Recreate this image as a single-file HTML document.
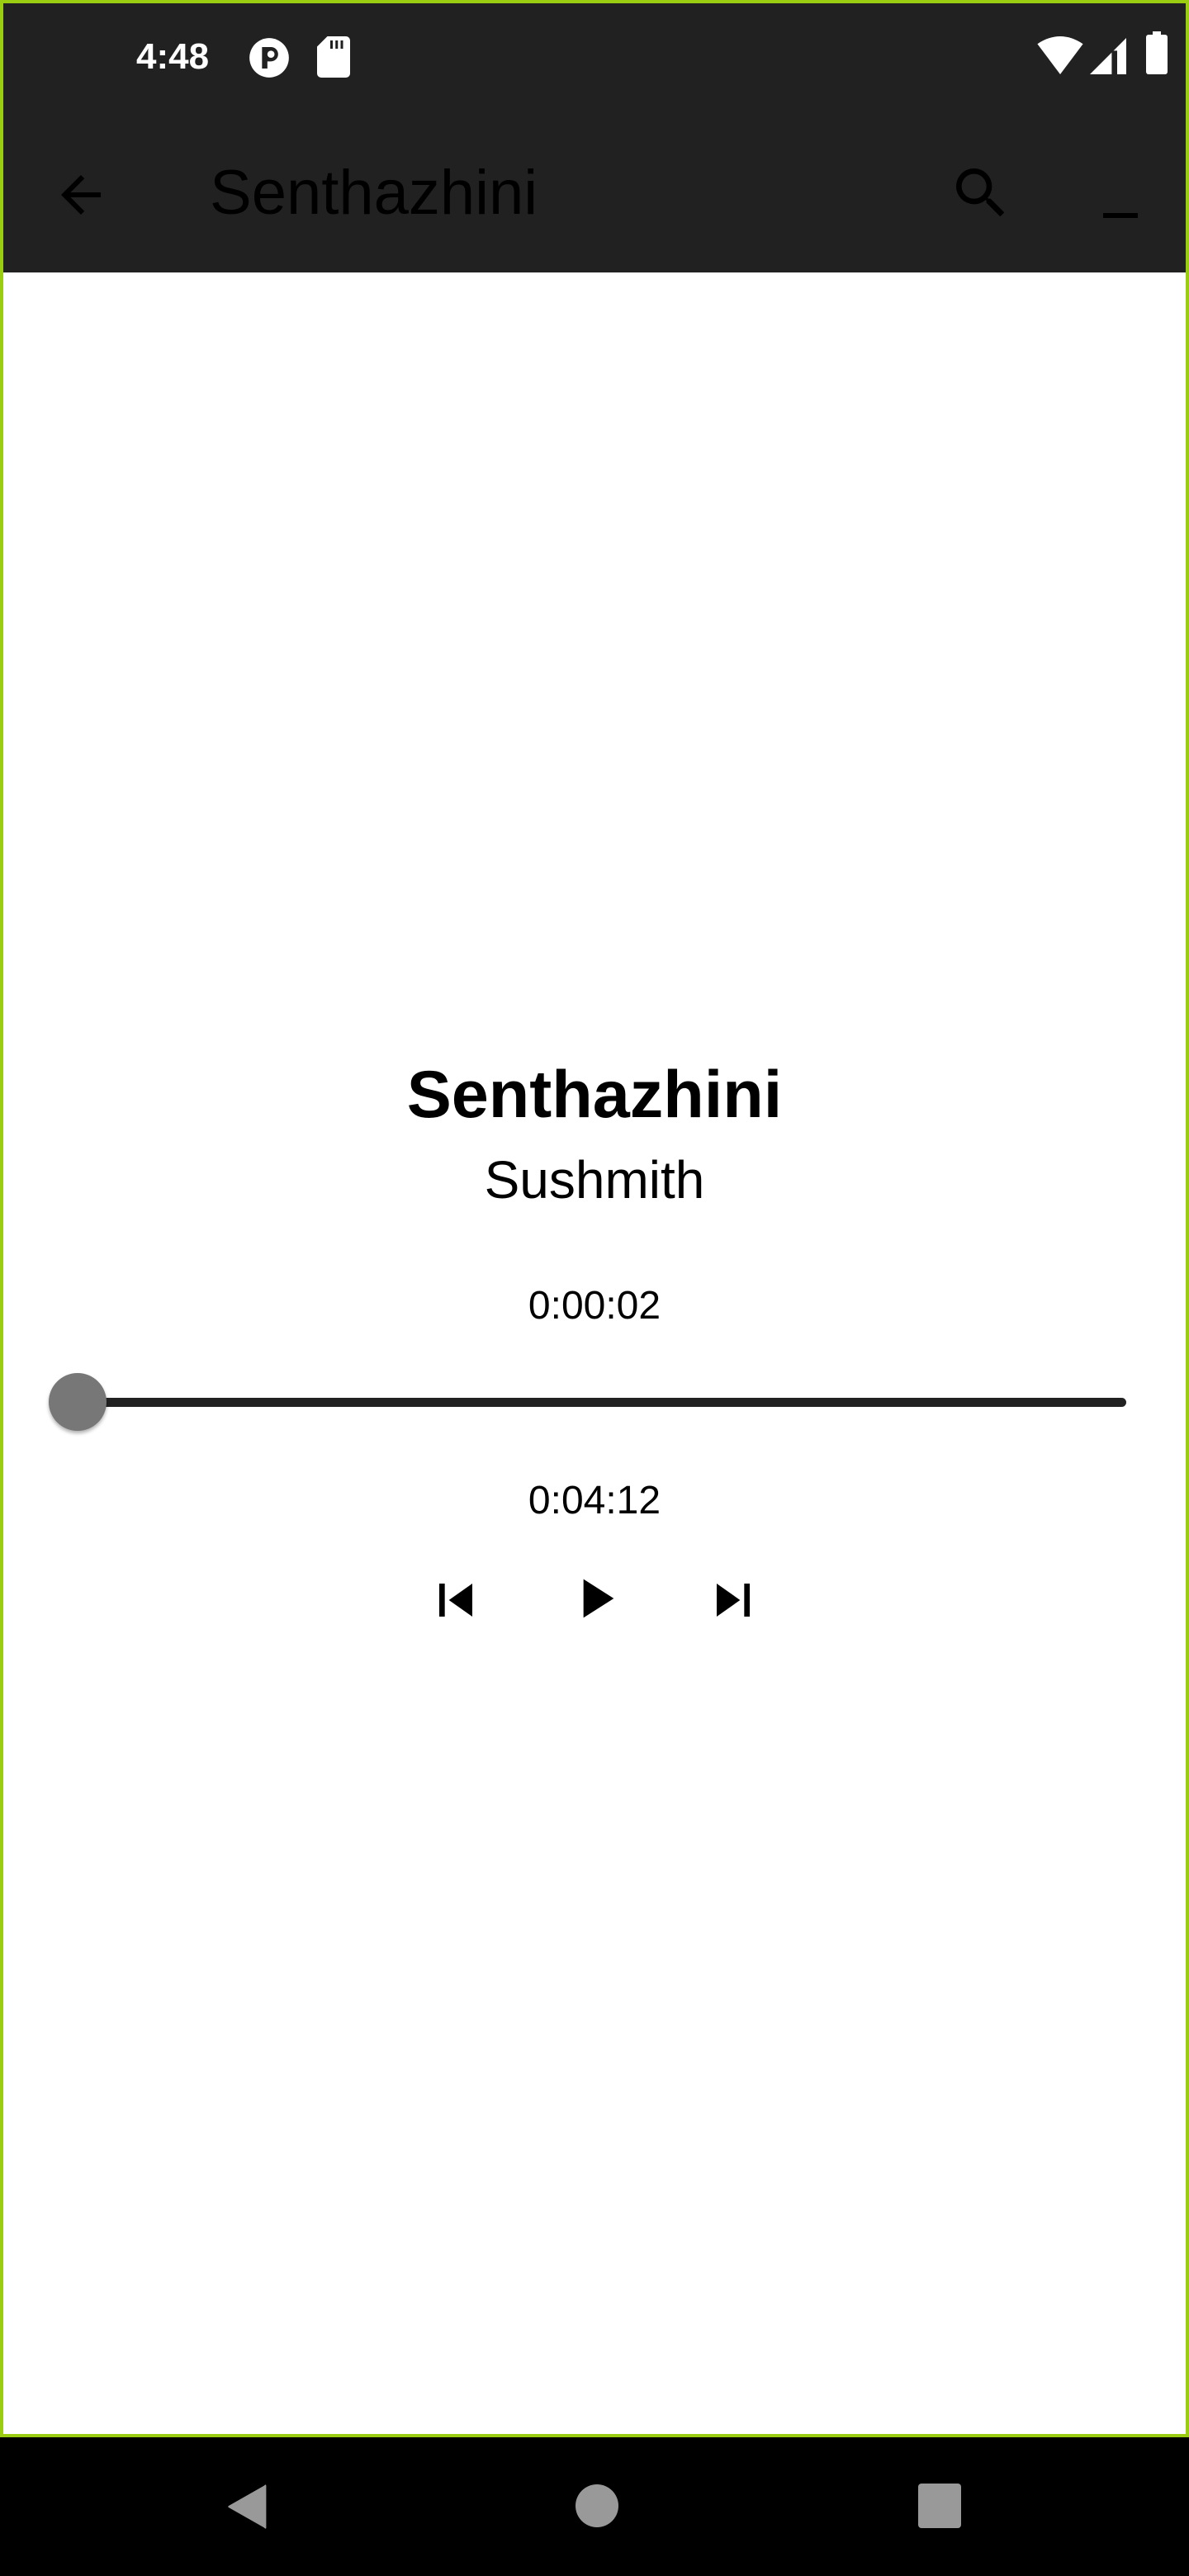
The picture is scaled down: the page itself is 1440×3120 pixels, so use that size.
<!DOCTYPE html>
<html><head><meta charset="utf-8"><style>
*{margin:0;padding:0;box-sizing:border-box}
body{width:1440px;height:3120px;position:relative;background:#000;font-family:"Liberation Sans",sans-serif;overflow:hidden}
#frame{position:absolute;left:0;top:0;width:1440px;height:2952px;border:4px solid #9acd12;background:#fff}
#bar{position:absolute;left:4px;top:4px;width:1432px;height:326px;background:#212121}
.t{position:absolute;white-space:nowrap}
</style></head><body>
<div id="frame"></div>
<div id="bar"></div>
<div class="t" style="left:165px;top:44px;font-size:44px;color:#fff;font-weight:bold">4:48</div>
<svg class="t" style="left:300px;top:44px" width="52" height="52" viewBox="0 0 24 24"><circle cx="12" cy="12" r="11" fill="#fff"/><path d="M8 6h5a4 4 0 0 1 0 8h-2v4H8z" fill="#212121"/><circle cx="13" cy="10" r="2" fill="#fff"/></svg>
<svg class="t" style="left:384px;top:44px" width="40" height="50" viewBox="0 0 16 20"><path d="M5 0h9a2 2 0 0 1 2 2v16a2 2 0 0 1-2 2H2a2 2 0 0 1-2-2V5z" fill="#fff"/><path d="M7 2v4M9.5 2v4M12 2v4" stroke="#212121" stroke-width="1.2"/></svg>
<svg class="t" style="left:1256px;top:44px" width="56" height="46" viewBox="0 0 24 20"><path d="M0 4Q12 -4 24 4L12 20z" fill="#fff"/></svg>
<svg class="t" style="left:1320px;top:46px" width="44" height="44" viewBox="0 0 20 20"><path d="M20 0V20H0z" fill="#fff"/><rect x="12" y="7" width="3" height="13" fill="#212121"/></svg>
<div class="t" style="left:1388px;top:42px;width:26px;height:48px;background:#fff;border-radius:3px"></div>
<div class="t" style="left:1396px;top:38px;width:10px;height:6px;background:#fff"></div>
<svg class="t" style="left:62px;top:200px" width="72" height="72" viewBox="0 0 24 24"><path d="M20 11H7.83l5.59-5.59L12 4l-8 8 8 8 1.41-1.41L7.83 13H20v-2z" fill="#000"/></svg>
<div class="t" style="left:254px;top:190px;font-size:76px;color:#000">Senthazhini</div>
<svg class="t" style="left:1148px;top:194px" width="80" height="80" viewBox="0 0 24 24"><path d="M15.5 14h-.79l-.28-.27A6.47 6.47 0 0 0 16 9.5 6.5 6.5 0 1 0 9.5 16c1.61 0 3.09-.59 4.23-1.57l.27.28v.79l5 4.99L20.49 19l-4.99-5zm-6 0C7.01 14 5 11.99 5 9.5S7.01 5 9.5 5 14 7.01 14 9.5 11.99 14 9.5 14z" fill="#000"/></svg>
<div class="t" style="left:1336px;top:258px;width:42px;height:6px;background:#000"></div>
<div class="t" style="left:0;width:1440px;text-align:center;top:1280px;font-size:81px;font-weight:bold;color:#000">Senthazhini</div>
<div class="t" style="left:0;width:1440px;text-align:center;top:1392px;font-size:64px;color:#000">Sushmith</div>
<div class="t" style="left:0;width:1440px;text-align:center;top:1554px;font-size:48px;color:#000">0:00:02</div>
<div class="t" style="left:94px;top:1693px;width:1270px;height:11px;background:#212121;border-radius:6px"></div>
<div class="t" style="left:59px;top:1663px;width:70px;height:70px;border-radius:50%;background:#777;box-shadow:0 3px 4px rgba(0,0,0,.3)"></div>
<div class="t" style="left:0;width:1440px;text-align:center;top:1790px;font-size:48px;color:#000">0:04:12</div>
<svg class="t" style="left:512px;top:1898px" width="80" height="80" viewBox="0 0 24 24"><path d="M6 6h2v12H6zm3.5 6l8.5 6V6z" fill="#000"/></svg>
<svg class="t" style="left:680px;top:1896px" width="80" height="80" viewBox="0 0 24 24"><path d="M8 5v14l11-7z" fill="#000"/></svg>
<svg class="t" style="left:848px;top:1898px" width="80" height="80" viewBox="0 0 24 24"><path d="M6 18l8.5-6L6 6v12zM16 6v12h2V6h-2z" fill="#000"/></svg>
<svg class="t" style="left:272px;top:3008px" width="56" height="56" viewBox="0 0 20 20"><path d="M18 1V19Q18 20 17 19L2 10.5Q1 10 2 9.5L17 1Q18 0 18 1z" fill="#999"/></svg>
<div class="t" style="left:697px;top:3009px;width:52px;height:52px;border-radius:50%;background:#999"></div>
<div class="t" style="left:1112px;top:3008px;width:52px;height:54px;border-radius:4px;background:#999"></div>
</body></html>
